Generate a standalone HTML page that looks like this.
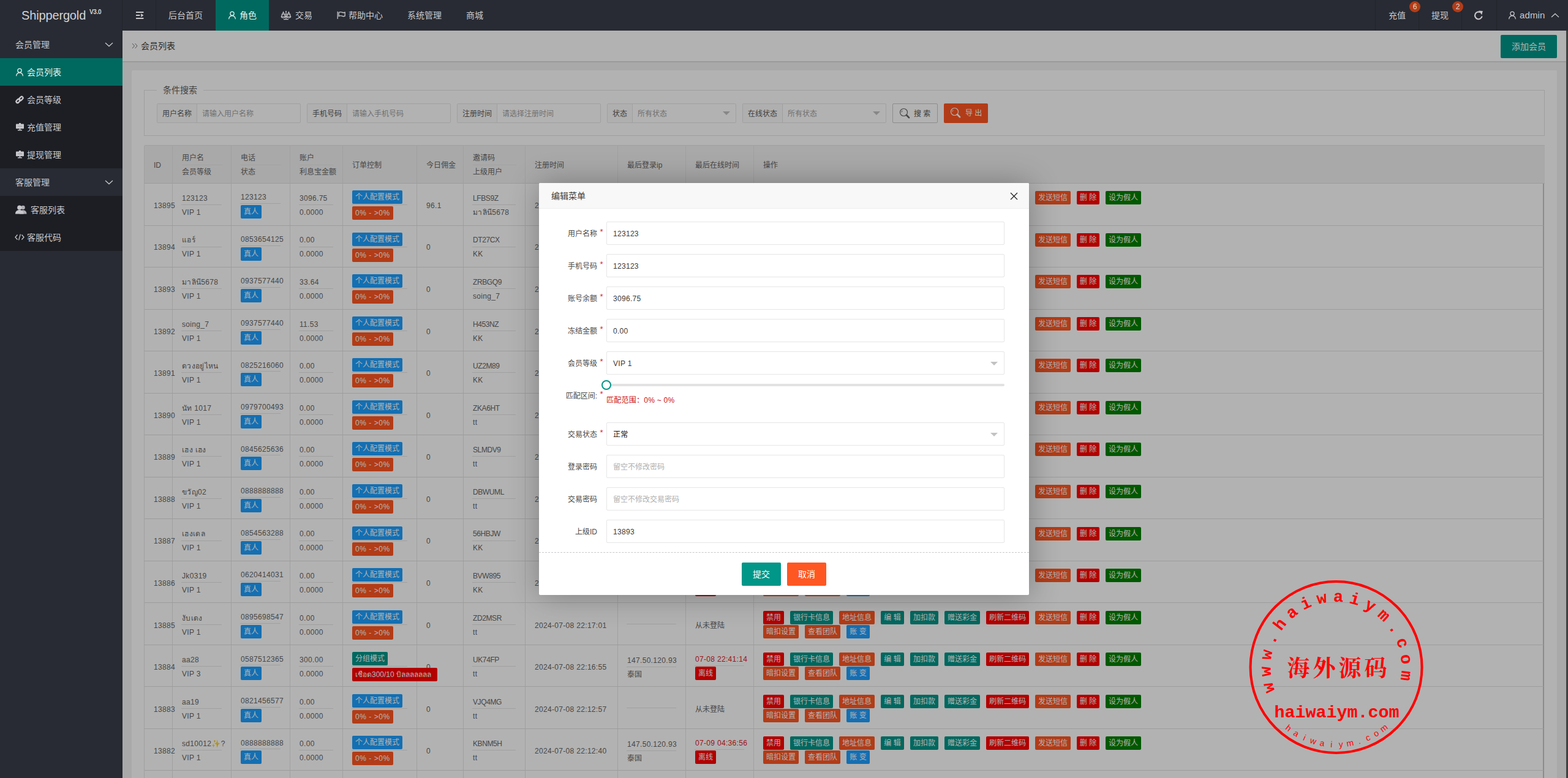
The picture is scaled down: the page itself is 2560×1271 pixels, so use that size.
<!DOCTYPE html><html lang="zh-CN"><head><meta charset="utf-8"><title>会员列表</title><style>
*{box-sizing:border-box;margin:0;padding:0}
html,body{width:2560px;height:1271px;overflow:hidden}
body{position:relative;font-family:"Liberation Sans","Noto Sans CJK SC",sans-serif;font-size:14px;color:#333;background:#f2f2f2;line-height:1}
.abs{position:absolute}
svg{display:block}
/* header */
#hd{z-index:15;position:absolute;left:0;top:0;width:2560px;height:50px;background:#282b33}
#logo{position:absolute;left:0;top:0;width:200px;height:50px;color:#d2d2d6}
#logo .t{position:absolute;left:35px;top:13px;font-size:20px;line-height:24px;letter-spacing:-.15px}
#logo .v{position:absolute;left:146px;top:14px;font-size:10px;line-height:12px;font-weight:bold;letter-spacing:-.3px}
.sep{position:absolute;top:0;width:1px;height:50px;background:rgba(0,0,0,.16)}
.nav{position:absolute;top:0;height:50px;line-height:50px;color:#c8c8cc;font-size:14px;white-space:nowrap}
.nav.on{background:#00695f;color:#e6f4f2}
.nav svg{position:absolute}
.badge{position:absolute;width:18px;height:18px;border-radius:9px;background:#b23d18;color:#e4d8d4;font-size:12px;line-height:18px;text-align:center}
/* sidebar */
#sd{z-index:15;position:absolute;left:0;top:50px;width:200px;height:1221px;background:#282b33}
.si{position:absolute;left:0;width:200px;height:45px;line-height:45px;color:#c8c8cc;font-size:14px;white-space:nowrap}
.si.c{background:#1c1e24}
.si.on{background:#00695f;color:#e6f4f2}
.si span{position:absolute;top:1px}
.si svg{position:absolute}
/* content */
#bc{position:absolute;left:200px;top:50px;width:2357px;height:50px;background:#fff;box-shadow:0 1px 2px 0 rgba(0,0,0,.18)}
#bc .t{position:absolute;left:30px;top:0;line-height:50px;font-size:14px;color:#404040}
#add{position:absolute;left:2250px;top:7px;width:92px;height:38px;line-height:38px;background:#009688;color:#fff;text-align:center;border-radius:2px;font-size:14px}
#card{position:absolute;left:215px;top:115px;width:2327px;height:1200px;background:#fff;border-radius:2px}
#fs{position:absolute;left:235px;top:147px;width:2287px;height:75px;border:1px solid #e2e2e2}
#fs .lg{position:absolute;left:20px;top:-10px;padding:0 10px;background:#fff;font-size:14px;line-height:18px;color:#606060}
.grp{position:absolute;top:169px;height:32px;border:1px solid #e6e6e6;border-radius:2px;background:#fff;font-size:12px;line-height:32px;white-space:nowrap}
.grp .l{position:absolute;left:0;top:0;height:30px;padding:0 8px;background:#FBFBFB;border-right:1px solid #e6e6e6;color:#5a5a5a}
.grp .p{position:absolute;top:0;color:#a2a2a2}
.grp .tri{position:absolute;right:9px;top:12px;width:0;height:0;border:6px solid transparent;border-top-color:#c2c2c2}
.btn{position:absolute;top:169px;height:32px;border-radius:2px;font-size:12px;line-height:32px;white-space:nowrap}
/* table */
#th{position:absolute;left:236px;top:237px;width:2286px;height:63px;background:#f2f2f2;border-top:1px solid #e6e6e6;border-bottom:1px solid #e0e0e0}
.hc{position:absolute;font-size:12px;color:#666;white-space:nowrap;line-height:20px;margin-top:.8px}
.vl{position:absolute;width:1px;background:#e6e6e6}
.row{position:absolute;left:236px;width:2284px;height:68px;font-size:12px;color:#666}
.rl{position:absolute;left:236px;width:2284px;height:1px;background:#e0e0e0}
.row>*{position:absolute;white-space:nowrap}
.tx{line-height:20px;height:20px;letter-spacing:.32px;margin-top:.8px}
.hr{height:1px;background:#e6e6e6}
.bd{height:22px;line-height:23.5px;padding:0 5px;border-radius:2px;color:#fff;font-size:12px;display:inline-block}
.b-blue{background:#1E9FFF}.b-or{background:#FF5722}.b-teal{background:#009688}.b-red{background:#ff0000}.b-green{background:#008000}
.ops{font-size:0}
.ops .bd{position:absolute}
/* shade + modal */
#shade{z-index:10;position:absolute;left:0;top:0;width:2560px;height:1271px;background:rgba(0,0,0,.3)}
#md{z-index:11;position:absolute;left:880px;top:299px;width:800px;height:673px;background:#fff;border-radius:2px;box-shadow:1px 1px 50px rgba(0,0,0,.3)}
#md .tt{position:absolute;left:0;top:0;width:800px;height:42px;background:#F8F8F8;border-bottom:1px solid #eee;border-radius:2px 2px 0 0;line-height:43px;padding-left:20px;font-size:14px;color:#3c3c3c}
.fl{position:absolute;left:0;width:95px;text-align:right;font-size:12px;line-height:40px;color:#4a4a4a;white-space:nowrap}
.st{position:absolute;left:99.5px;color:#d81e3c;font-size:13px;line-height:14px;margin-top:1.5px}
.in{position:absolute;left:110px;width:650px;height:38px;border:1px solid #e6e6e6;border-radius:2px;background:#fff;font-size:12px;line-height:38px;padding-left:10px;color:#3a3a3a;white-space:nowrap;letter-spacing:.3px}
.in.ph{color:#b0b0b0;letter-spacing:0}
.in .tri{position:absolute;right:10px;top:16px;width:0;height:0;border:6px solid transparent;border-top-color:#c2c2c2}
.mb{position:absolute;top:620px;width:64px;height:38px;line-height:38px;text-align:center;color:#fff;font-size:14px;border-radius:2px}
</style></head><body>
<div id="bc"><svg class="abs" style="left:15px;top:20px" width="10" height="10" viewBox="0 0 10 10" fill="none" stroke="#777" stroke-width="1"><path d="M1 1l3.5 4L1 9M5.5 1L9 5 5.5 9"/></svg><div class="t">会员列表</div><div id="add">添加会员</div></div>
<div id="card"></div>
<div id="fs"><div class="lg">条件搜索</div></div>
<div class="grp" style="left:256px;width:235px"><div class="l">用户名称</div><div class="p" style="left:73px">请输入用户名称</div></div>
<div class="grp" style="left:501px;width:235px"><div class="l">手机号码</div><div class="p" style="left:73px">请输入手机号码</div></div>
<div class="grp" style="left:746px;width:235px"><div class="l">注册时间</div><div class="p" style="left:73px">请选择注册时间</div></div>
<div class="grp" style="left:991px;width:211px"><div class="l">状态</div><div class="p" style="left:49px">所有状态</div><div class="tri"></div></div>
<div class="grp" style="left:1212px;width:235px"><div class="l">在线状态</div><div class="p" style="left:73px">所有状态</div><div class="tri"></div></div>
<div class="btn" style="left:1457px;width:74px;border:1px solid #C9C9C9;background:#fff;color:#555"><svg class="abs" style="left:10px;top:6px" width="18" height="18" viewBox="0 0 18 18" fill="none" stroke="#666" stroke-width="1.2"><circle cx="7.5" cy="7.5" r="6"/><path d="M4 7.5a3.5 3.5 0 0 1 1.5-2.8" stroke-width="1"/><path d="M12 12l4 4.2" stroke-width="2.6" stroke-linecap="round"/></svg><span class="abs" style="left:34px;top:0">搜 索</span></div>
<div class="btn" style="left:1541px;width:72px;background:#FF5722;color:#fff;line-height:34px"><svg class="abs" style="left:10px;top:6px" width="18" height="18" viewBox="0 0 18 18" fill="none" stroke="#fff" stroke-width="1.2"><circle cx="7.5" cy="7.5" r="6"/><path d="M4 7.5a3.5 3.5 0 0 1 1.5-2.8" stroke-width="1"/><path d="M12 12l4 4.2" stroke-width="2.6" stroke-linecap="round"/></svg><span class="abs" style="left:35px;top:-1px">导 出</span></div>
<div id="th"></div>
<div class="hc" style="left:251px;top:259px">ID</div>
<div class="hc" style="left:297px;top:247.5px">用户名</div><div class="hc" style="left:297px;top:270.5px">会员等级</div>
<div class="hr abs" style="left:297px;top:269px;width:66px;background:#e9e9e9"></div>
<div class="hc" style="left:393px;top:247.5px">电话</div><div class="hc" style="left:393px;top:270.5px">状态</div>
<div class="hr abs" style="left:393px;top:269px;width:66px;background:#e9e9e9"></div>
<div class="hc" style="left:489px;top:247.5px">账户</div><div class="hc" style="left:489px;top:270.5px">利息宝金额</div>
<div class="hr abs" style="left:489px;top:269px;width:56px;background:#e9e9e9"></div>
<div class="hc" style="left:575px;top:259px">订单控制</div>
<div class="hc" style="left:696px;top:259px">今日佣金</div>
<div class="hc" style="left:772px;top:247.5px">邀请码</div><div class="hc" style="left:772px;top:270.5px">上级用户</div>
<div class="hr abs" style="left:772px;top:269px;width:71px;background:#e9e9e9"></div>
<div class="hc" style="left:873px;top:259px">注册时间</div>
<div class="hc" style="left:1024px;top:259px">最后登录ip</div>
<div class="hc" style="left:1135px;top:259px">最后在线时间</div>
<div class="hc" style="left:1246px;top:259px">操作</div>
<div class="vl" style="left:281px;top:238px;height:1040px"></div>
<div class="vl" style="left:377px;top:238px;height:1040px"></div>
<div class="vl" style="left:473px;top:238px;height:1040px"></div>
<div class="vl" style="left:559px;top:238px;height:1040px"></div>
<div class="vl" style="left:680px;top:238px;height:1040px"></div>
<div class="vl" style="left:756px;top:238px;height:1040px"></div>
<div class="vl" style="left:857px;top:238px;height:1040px"></div>
<div class="vl" style="left:1008px;top:238px;height:1040px"></div>
<div class="vl" style="left:1119px;top:238px;height:1040px"></div>
<div class="vl" style="left:1230px;top:238px;height:1040px"></div>
<div class="vl" style="left:235px;top:238px;height:1040px"></div>
<div class="abs" style="left:2519px;top:300px;width:2px;height:980px;background:#c8c8c8"></div>
<div class="rl" style="top:367.5px"></div><div class="row" style="top:300.00px"><div class="tx" style="left:15px;top:25px">13895</div><div class="tx" style="left:61px;top:13px">123123</div><div class="hr" style="left:60px;top:34px;width:66px"></div><div class="tx" style="left:61px;top:36px">VIP 1</div><div class="tx" style="left:157px;top:11.5px">123123</div><div class="hr" style="left:156px;top:32px;width:66px"></div><div class="bd b-blue" style="left:157px;top:35px">真人</div><div class="tx" style="left:253px;top:13px">3096.75</div><div class="hr" style="left:252px;top:34px;width:56px"></div><div class="tx" style="left:253px;top:36px">0.0000</div><div class="bd b-blue" style="left:339px;top:11px">个人配置模式</div><div class="bd b-or" style="left:339px;top:37px;letter-spacing:.55px">0% - &gt;0%</div><div class="hr" style="left:338px;top:34px;width:91px"></div><div class="tx" style="left:460px;top:25px">96.1</div><div class="tx" style="left:536px;top:13px;letter-spacing:-.4px">LFBS9Z</div><div class="hr" style="left:535px;top:34px;width:71px"></div><div class="tx" style="left:536px;top:36px">มาลินี5678</div><div class="tx" style="left:637px;top:25px">2024-07-08 22:58:31</div><div class="hr" style="left:787px;top:34.5px;width:81px"></div><div class="tx" style="left:788px;top:14px">147.50.120.93</div><div class="tx" style="left:788px;top:36.5px;letter-spacing:0">泰国</div><div class="tx" style="left:899px;top:12px;color:#e02020">07-08 23:02:11</div><div class="hr" style="left:898px;top:33px;width:81px"></div><div class="bd b-red" style="left:899px;top:35px">离线</div><div class="bd b-red" style="left:1010px;top:12px;width:34px;text-align:center;padding:0">禁用</div><div class="bd b-teal" style="left:1054px;top:12px;width:70px;text-align:center;padding:0">银行卡信息</div><div class="bd b-or" style="left:1134px;top:12px;width:58px;text-align:center;padding:0">地址信息</div><div class="bd b-teal" style="left:1202px;top:12px;width:38px;text-align:center;padding:0">编 辑</div><div class="bd b-teal" style="left:1250px;top:12px;width:46px;text-align:center;padding:0">加扣款</div><div class="bd b-teal" style="left:1306px;top:12px;width:58px;text-align:center;padding:0">赠送彩金</div><div class="bd b-red" style="left:1374px;top:12px;width:70px;text-align:center;padding:0">刷新二维码</div><div class="bd b-or" style="left:1454px;top:12px;width:58px;text-align:center;padding:0">发送短信</div><div class="bd b-red" style="left:1522px;top:12px;width:37px;text-align:center;padding:0">删 除</div><div class="bd b-green" style="left:1569px;top:12px;width:58px;text-align:center;padding:0">设为假人</div><div class="bd b-or" style="left:1010px;top:35px;width:58px;text-align:center;padding:0">暗扣设置</div><div class="bd b-or" style="left:1078px;top:35px;width:58px;text-align:center;padding:0">查看团队</div><div class="bd b-blue" style="left:1146px;top:35px;width:38px;text-align:center;padding:0">账 变</div></div>
<div class="rl" style="top:436.0px"></div><div class="row" style="top:368.57px"><div class="tx" style="left:15px;top:25px">13894</div><div class="tx" style="left:61px;top:13px">แอร์</div><div class="hr" style="left:60px;top:34px;width:66px"></div><div class="tx" style="left:61px;top:36px">VIP 1</div><div class="tx" style="left:157px;top:11.5px">0853654125</div><div class="hr" style="left:156px;top:32px;width:66px"></div><div class="bd b-blue" style="left:157px;top:35px">真人</div><div class="tx" style="left:253px;top:13px">0.00</div><div class="hr" style="left:252px;top:34px;width:56px"></div><div class="tx" style="left:253px;top:36px">0.0000</div><div class="bd b-blue" style="left:339px;top:11px">个人配置模式</div><div class="bd b-or" style="left:339px;top:37px;letter-spacing:.55px">0% - &gt;0%</div><div class="hr" style="left:338px;top:34px;width:91px"></div><div class="tx" style="left:460px;top:25px">0</div><div class="tx" style="left:536px;top:13px;letter-spacing:-.4px">DT27CX</div><div class="hr" style="left:535px;top:34px;width:71px"></div><div class="tx" style="left:536px;top:36px">KK</div><div class="tx" style="left:637px;top:25px">2024-07-08 22:51:20</div><div class="hr" style="left:787px;top:33.5px;width:81px"></div><div class="tx" style="left:899px;top:25px;letter-spacing:0">从未登陆</div><div class="bd b-red" style="left:1010px;top:12px;width:34px;text-align:center;padding:0">禁用</div><div class="bd b-teal" style="left:1054px;top:12px;width:70px;text-align:center;padding:0">银行卡信息</div><div class="bd b-or" style="left:1134px;top:12px;width:58px;text-align:center;padding:0">地址信息</div><div class="bd b-teal" style="left:1202px;top:12px;width:38px;text-align:center;padding:0">编 辑</div><div class="bd b-teal" style="left:1250px;top:12px;width:46px;text-align:center;padding:0">加扣款</div><div class="bd b-teal" style="left:1306px;top:12px;width:58px;text-align:center;padding:0">赠送彩金</div><div class="bd b-red" style="left:1374px;top:12px;width:70px;text-align:center;padding:0">刷新二维码</div><div class="bd b-or" style="left:1454px;top:12px;width:58px;text-align:center;padding:0">发送短信</div><div class="bd b-red" style="left:1522px;top:12px;width:37px;text-align:center;padding:0">删 除</div><div class="bd b-green" style="left:1569px;top:12px;width:58px;text-align:center;padding:0">设为假人</div><div class="bd b-or" style="left:1010px;top:35px;width:58px;text-align:center;padding:0">暗扣设置</div><div class="bd b-or" style="left:1078px;top:35px;width:58px;text-align:center;padding:0">查看团队</div><div class="bd b-blue" style="left:1146px;top:35px;width:38px;text-align:center;padding:0">账 变</div></div>
<div class="rl" style="top:504.5px"></div><div class="row" style="top:437.15px"><div class="tx" style="left:15px;top:25px">13893</div><div class="tx" style="left:61px;top:13px">มาลินี5678</div><div class="hr" style="left:60px;top:34px;width:66px"></div><div class="tx" style="left:61px;top:36px">VIP 1</div><div class="tx" style="left:157px;top:11.5px">0937577440</div><div class="hr" style="left:156px;top:32px;width:66px"></div><div class="bd b-blue" style="left:157px;top:35px">真人</div><div class="tx" style="left:253px;top:13px">33.64</div><div class="hr" style="left:252px;top:34px;width:56px"></div><div class="tx" style="left:253px;top:36px">0.0000</div><div class="bd b-blue" style="left:339px;top:11px">个人配置模式</div><div class="bd b-or" style="left:339px;top:37px;letter-spacing:.55px">0% - &gt;0%</div><div class="hr" style="left:338px;top:34px;width:91px"></div><div class="tx" style="left:460px;top:25px">0</div><div class="tx" style="left:536px;top:13px;letter-spacing:-.4px">ZRBGQ9</div><div class="hr" style="left:535px;top:34px;width:71px"></div><div class="tx" style="left:536px;top:36px">soing_7</div><div class="tx" style="left:637px;top:25px">2024-07-08 22:47:03</div><div class="hr" style="left:787px;top:34.5px;width:81px"></div><div class="tx" style="left:788px;top:14px">147.50.120.93</div><div class="tx" style="left:788px;top:36.5px;letter-spacing:0">泰国</div><div class="tx" style="left:899px;top:12px;color:#e02020">07-08 22:59:40</div><div class="hr" style="left:898px;top:33px;width:81px"></div><div class="bd b-red" style="left:899px;top:35px">离线</div><div class="bd b-red" style="left:1010px;top:12px;width:34px;text-align:center;padding:0">禁用</div><div class="bd b-teal" style="left:1054px;top:12px;width:70px;text-align:center;padding:0">银行卡信息</div><div class="bd b-or" style="left:1134px;top:12px;width:58px;text-align:center;padding:0">地址信息</div><div class="bd b-teal" style="left:1202px;top:12px;width:38px;text-align:center;padding:0">编 辑</div><div class="bd b-teal" style="left:1250px;top:12px;width:46px;text-align:center;padding:0">加扣款</div><div class="bd b-teal" style="left:1306px;top:12px;width:58px;text-align:center;padding:0">赠送彩金</div><div class="bd b-red" style="left:1374px;top:12px;width:70px;text-align:center;padding:0">刷新二维码</div><div class="bd b-or" style="left:1454px;top:12px;width:58px;text-align:center;padding:0">发送短信</div><div class="bd b-red" style="left:1522px;top:12px;width:37px;text-align:center;padding:0">删 除</div><div class="bd b-green" style="left:1569px;top:12px;width:58px;text-align:center;padding:0">设为假人</div><div class="bd b-or" style="left:1010px;top:35px;width:58px;text-align:center;padding:0">暗扣设置</div><div class="bd b-or" style="left:1078px;top:35px;width:58px;text-align:center;padding:0">查看团队</div><div class="bd b-blue" style="left:1146px;top:35px;width:38px;text-align:center;padding:0">账 变</div></div>
<div class="rl" style="top:573.0px"></div><div class="row" style="top:505.73px"><div class="tx" style="left:15px;top:25px">13892</div><div class="tx" style="left:61px;top:13px">soing_7</div><div class="hr" style="left:60px;top:34px;width:66px"></div><div class="tx" style="left:61px;top:36px">VIP 1</div><div class="tx" style="left:157px;top:11.5px">0937577440</div><div class="hr" style="left:156px;top:32px;width:66px"></div><div class="bd b-blue" style="left:157px;top:35px">真人</div><div class="tx" style="left:253px;top:13px">11.53</div><div class="hr" style="left:252px;top:34px;width:56px"></div><div class="tx" style="left:253px;top:36px">0.0000</div><div class="bd b-blue" style="left:339px;top:11px">个人配置模式</div><div class="bd b-or" style="left:339px;top:37px;letter-spacing:.55px">0% - &gt;0%</div><div class="hr" style="left:338px;top:34px;width:91px"></div><div class="tx" style="left:460px;top:25px">0</div><div class="tx" style="left:536px;top:13px;letter-spacing:-.4px">H453NZ</div><div class="hr" style="left:535px;top:34px;width:71px"></div><div class="tx" style="left:536px;top:36px">KK</div><div class="tx" style="left:637px;top:25px">2024-07-08 22:41:36</div><div class="hr" style="left:787px;top:34.5px;width:81px"></div><div class="tx" style="left:788px;top:14px">147.50.120.93</div><div class="tx" style="left:788px;top:36.5px;letter-spacing:0">泰国</div><div class="tx" style="left:899px;top:12px;color:#e02020">07-08 22:50:12</div><div class="hr" style="left:898px;top:33px;width:81px"></div><div class="bd b-red" style="left:899px;top:35px">离线</div><div class="bd b-red" style="left:1010px;top:12px;width:34px;text-align:center;padding:0">禁用</div><div class="bd b-teal" style="left:1054px;top:12px;width:70px;text-align:center;padding:0">银行卡信息</div><div class="bd b-or" style="left:1134px;top:12px;width:58px;text-align:center;padding:0">地址信息</div><div class="bd b-teal" style="left:1202px;top:12px;width:38px;text-align:center;padding:0">编 辑</div><div class="bd b-teal" style="left:1250px;top:12px;width:46px;text-align:center;padding:0">加扣款</div><div class="bd b-teal" style="left:1306px;top:12px;width:58px;text-align:center;padding:0">赠送彩金</div><div class="bd b-red" style="left:1374px;top:12px;width:70px;text-align:center;padding:0">刷新二维码</div><div class="bd b-or" style="left:1454px;top:12px;width:58px;text-align:center;padding:0">发送短信</div><div class="bd b-red" style="left:1522px;top:12px;width:37px;text-align:center;padding:0">删 除</div><div class="bd b-green" style="left:1569px;top:12px;width:58px;text-align:center;padding:0">设为假人</div><div class="bd b-or" style="left:1010px;top:35px;width:58px;text-align:center;padding:0">暗扣设置</div><div class="bd b-or" style="left:1078px;top:35px;width:58px;text-align:center;padding:0">查看团队</div><div class="bd b-blue" style="left:1146px;top:35px;width:38px;text-align:center;padding:0">账 变</div></div>
<div class="rl" style="top:641.5px"></div><div class="row" style="top:574.30px"><div class="tx" style="left:15px;top:25px">13891</div><div class="tx" style="left:61px;top:13px">ดวงอยู่ไหน</div><div class="hr" style="left:60px;top:34px;width:66px"></div><div class="tx" style="left:61px;top:36px">VIP 1</div><div class="tx" style="left:157px;top:11.5px">0825216060</div><div class="hr" style="left:156px;top:32px;width:66px"></div><div class="bd b-blue" style="left:157px;top:35px">真人</div><div class="tx" style="left:253px;top:13px">0.00</div><div class="hr" style="left:252px;top:34px;width:56px"></div><div class="tx" style="left:253px;top:36px">0.0000</div><div class="bd b-blue" style="left:339px;top:11px">个人配置模式</div><div class="bd b-or" style="left:339px;top:37px;letter-spacing:.55px">0% - &gt;0%</div><div class="hr" style="left:338px;top:34px;width:91px"></div><div class="tx" style="left:460px;top:25px">0</div><div class="tx" style="left:536px;top:13px;letter-spacing:-.4px">UZ2M89</div><div class="hr" style="left:535px;top:34px;width:71px"></div><div class="tx" style="left:536px;top:36px">KK</div><div class="tx" style="left:637px;top:25px">2024-07-08 22:38:15</div><div class="hr" style="left:787px;top:33.5px;width:81px"></div><div class="tx" style="left:899px;top:25px;letter-spacing:0">从未登陆</div><div class="bd b-red" style="left:1010px;top:12px;width:34px;text-align:center;padding:0">禁用</div><div class="bd b-teal" style="left:1054px;top:12px;width:70px;text-align:center;padding:0">银行卡信息</div><div class="bd b-or" style="left:1134px;top:12px;width:58px;text-align:center;padding:0">地址信息</div><div class="bd b-teal" style="left:1202px;top:12px;width:38px;text-align:center;padding:0">编 辑</div><div class="bd b-teal" style="left:1250px;top:12px;width:46px;text-align:center;padding:0">加扣款</div><div class="bd b-teal" style="left:1306px;top:12px;width:58px;text-align:center;padding:0">赠送彩金</div><div class="bd b-red" style="left:1374px;top:12px;width:70px;text-align:center;padding:0">刷新二维码</div><div class="bd b-or" style="left:1454px;top:12px;width:58px;text-align:center;padding:0">发送短信</div><div class="bd b-red" style="left:1522px;top:12px;width:37px;text-align:center;padding:0">删 除</div><div class="bd b-green" style="left:1569px;top:12px;width:58px;text-align:center;padding:0">设为假人</div><div class="bd b-or" style="left:1010px;top:35px;width:58px;text-align:center;padding:0">暗扣设置</div><div class="bd b-or" style="left:1078px;top:35px;width:58px;text-align:center;padding:0">查看团队</div><div class="bd b-blue" style="left:1146px;top:35px;width:38px;text-align:center;padding:0">账 变</div></div>
<div class="rl" style="top:710.0px"></div><div class="row" style="top:642.88px"><div class="tx" style="left:15px;top:25px">13890</div><div class="tx" style="left:61px;top:13px">นัท 1017</div><div class="hr" style="left:60px;top:34px;width:66px"></div><div class="tx" style="left:61px;top:36px">VIP 1</div><div class="tx" style="left:157px;top:11.5px">0979700493</div><div class="hr" style="left:156px;top:32px;width:66px"></div><div class="bd b-blue" style="left:157px;top:35px">真人</div><div class="tx" style="left:253px;top:13px">0.00</div><div class="hr" style="left:252px;top:34px;width:56px"></div><div class="tx" style="left:253px;top:36px">0.0000</div><div class="bd b-blue" style="left:339px;top:11px">个人配置模式</div><div class="bd b-or" style="left:339px;top:37px;letter-spacing:.55px">0% - &gt;0%</div><div class="hr" style="left:338px;top:34px;width:91px"></div><div class="tx" style="left:460px;top:25px">0</div><div class="tx" style="left:536px;top:13px;letter-spacing:-.4px">ZKA6HT</div><div class="hr" style="left:535px;top:34px;width:71px"></div><div class="tx" style="left:536px;top:36px">tt</div><div class="tx" style="left:637px;top:25px">2024-07-08 22:33:48</div><div class="hr" style="left:787px;top:33.5px;width:81px"></div><div class="tx" style="left:899px;top:25px;letter-spacing:0">从未登陆</div><div class="bd b-red" style="left:1010px;top:12px;width:34px;text-align:center;padding:0">禁用</div><div class="bd b-teal" style="left:1054px;top:12px;width:70px;text-align:center;padding:0">银行卡信息</div><div class="bd b-or" style="left:1134px;top:12px;width:58px;text-align:center;padding:0">地址信息</div><div class="bd b-teal" style="left:1202px;top:12px;width:38px;text-align:center;padding:0">编 辑</div><div class="bd b-teal" style="left:1250px;top:12px;width:46px;text-align:center;padding:0">加扣款</div><div class="bd b-teal" style="left:1306px;top:12px;width:58px;text-align:center;padding:0">赠送彩金</div><div class="bd b-red" style="left:1374px;top:12px;width:70px;text-align:center;padding:0">刷新二维码</div><div class="bd b-or" style="left:1454px;top:12px;width:58px;text-align:center;padding:0">发送短信</div><div class="bd b-red" style="left:1522px;top:12px;width:37px;text-align:center;padding:0">删 除</div><div class="bd b-green" style="left:1569px;top:12px;width:58px;text-align:center;padding:0">设为假人</div><div class="bd b-or" style="left:1010px;top:35px;width:58px;text-align:center;padding:0">暗扣设置</div><div class="bd b-or" style="left:1078px;top:35px;width:58px;text-align:center;padding:0">查看团队</div><div class="bd b-blue" style="left:1146px;top:35px;width:38px;text-align:center;padding:0">账 变</div></div>
<div class="rl" style="top:778.5px"></div><div class="row" style="top:711.45px"><div class="tx" style="left:15px;top:25px">13889</div><div class="tx" style="left:61px;top:13px">เฮง เฮง</div><div class="hr" style="left:60px;top:34px;width:66px"></div><div class="tx" style="left:61px;top:36px">VIP 1</div><div class="tx" style="left:157px;top:11.5px">0845625636</div><div class="hr" style="left:156px;top:32px;width:66px"></div><div class="bd b-blue" style="left:157px;top:35px">真人</div><div class="tx" style="left:253px;top:13px">0.00</div><div class="hr" style="left:252px;top:34px;width:56px"></div><div class="tx" style="left:253px;top:36px">0.0000</div><div class="bd b-blue" style="left:339px;top:11px">个人配置模式</div><div class="bd b-or" style="left:339px;top:37px;letter-spacing:.55px">0% - &gt;0%</div><div class="hr" style="left:338px;top:34px;width:91px"></div><div class="tx" style="left:460px;top:25px">0</div><div class="tx" style="left:536px;top:13px;letter-spacing:-.4px">SLMDV9</div><div class="hr" style="left:535px;top:34px;width:71px"></div><div class="tx" style="left:536px;top:36px">tt</div><div class="tx" style="left:637px;top:25px">2024-07-08 22:30:27</div><div class="hr" style="left:787px;top:33.5px;width:81px"></div><div class="tx" style="left:899px;top:25px;letter-spacing:0">从未登陆</div><div class="bd b-red" style="left:1010px;top:12px;width:34px;text-align:center;padding:0">禁用</div><div class="bd b-teal" style="left:1054px;top:12px;width:70px;text-align:center;padding:0">银行卡信息</div><div class="bd b-or" style="left:1134px;top:12px;width:58px;text-align:center;padding:0">地址信息</div><div class="bd b-teal" style="left:1202px;top:12px;width:38px;text-align:center;padding:0">编 辑</div><div class="bd b-teal" style="left:1250px;top:12px;width:46px;text-align:center;padding:0">加扣款</div><div class="bd b-teal" style="left:1306px;top:12px;width:58px;text-align:center;padding:0">赠送彩金</div><div class="bd b-red" style="left:1374px;top:12px;width:70px;text-align:center;padding:0">刷新二维码</div><div class="bd b-or" style="left:1454px;top:12px;width:58px;text-align:center;padding:0">发送短信</div><div class="bd b-red" style="left:1522px;top:12px;width:37px;text-align:center;padding:0">删 除</div><div class="bd b-green" style="left:1569px;top:12px;width:58px;text-align:center;padding:0">设为假人</div><div class="bd b-or" style="left:1010px;top:35px;width:58px;text-align:center;padding:0">暗扣设置</div><div class="bd b-or" style="left:1078px;top:35px;width:58px;text-align:center;padding:0">查看团队</div><div class="bd b-blue" style="left:1146px;top:35px;width:38px;text-align:center;padding:0">账 变</div></div>
<div class="rl" style="top:847.0px"></div><div class="row" style="top:780.02px"><div class="tx" style="left:15px;top:25px">13888</div><div class="tx" style="left:61px;top:13px">ขวัญ02</div><div class="hr" style="left:60px;top:34px;width:66px"></div><div class="tx" style="left:61px;top:36px">VIP 1</div><div class="tx" style="left:157px;top:11.5px">0888888888</div><div class="hr" style="left:156px;top:32px;width:66px"></div><div class="bd b-blue" style="left:157px;top:35px">真人</div><div class="tx" style="left:253px;top:13px">0.00</div><div class="hr" style="left:252px;top:34px;width:56px"></div><div class="tx" style="left:253px;top:36px">0.0000</div><div class="bd b-blue" style="left:339px;top:11px">个人配置模式</div><div class="bd b-or" style="left:339px;top:37px;letter-spacing:.55px">0% - &gt;0%</div><div class="hr" style="left:338px;top:34px;width:91px"></div><div class="tx" style="left:460px;top:25px">0</div><div class="tx" style="left:536px;top:13px;letter-spacing:-.4px">DBWUML</div><div class="hr" style="left:535px;top:34px;width:71px"></div><div class="tx" style="left:536px;top:36px">tt</div><div class="tx" style="left:637px;top:25px">2024-07-08 22:26:54</div><div class="hr" style="left:787px;top:33.5px;width:81px"></div><div class="tx" style="left:899px;top:25px;letter-spacing:0">从未登陆</div><div class="bd b-red" style="left:1010px;top:12px;width:34px;text-align:center;padding:0">禁用</div><div class="bd b-teal" style="left:1054px;top:12px;width:70px;text-align:center;padding:0">银行卡信息</div><div class="bd b-or" style="left:1134px;top:12px;width:58px;text-align:center;padding:0">地址信息</div><div class="bd b-teal" style="left:1202px;top:12px;width:38px;text-align:center;padding:0">编 辑</div><div class="bd b-teal" style="left:1250px;top:12px;width:46px;text-align:center;padding:0">加扣款</div><div class="bd b-teal" style="left:1306px;top:12px;width:58px;text-align:center;padding:0">赠送彩金</div><div class="bd b-red" style="left:1374px;top:12px;width:70px;text-align:center;padding:0">刷新二维码</div><div class="bd b-or" style="left:1454px;top:12px;width:58px;text-align:center;padding:0">发送短信</div><div class="bd b-red" style="left:1522px;top:12px;width:37px;text-align:center;padding:0">删 除</div><div class="bd b-green" style="left:1569px;top:12px;width:58px;text-align:center;padding:0">设为假人</div><div class="bd b-or" style="left:1010px;top:35px;width:58px;text-align:center;padding:0">暗扣设置</div><div class="bd b-or" style="left:1078px;top:35px;width:58px;text-align:center;padding:0">查看团队</div><div class="bd b-blue" style="left:1146px;top:35px;width:38px;text-align:center;padding:0">账 变</div></div>
<div class="rl" style="top:915.5px"></div><div class="row" style="top:848.60px"><div class="tx" style="left:15px;top:25px">13887</div><div class="tx" style="left:61px;top:13px">เฮงเดล</div><div class="hr" style="left:60px;top:34px;width:66px"></div><div class="tx" style="left:61px;top:36px">VIP 1</div><div class="tx" style="left:157px;top:11.5px">0854563288</div><div class="hr" style="left:156px;top:32px;width:66px"></div><div class="bd b-blue" style="left:157px;top:35px">真人</div><div class="tx" style="left:253px;top:13px">0.00</div><div class="hr" style="left:252px;top:34px;width:56px"></div><div class="tx" style="left:253px;top:36px">0.0000</div><div class="bd b-blue" style="left:339px;top:11px">个人配置模式</div><div class="bd b-or" style="left:339px;top:37px;letter-spacing:.55px">0% - &gt;0%</div><div class="hr" style="left:338px;top:34px;width:91px"></div><div class="tx" style="left:460px;top:25px">0</div><div class="tx" style="left:536px;top:13px;letter-spacing:-.4px">56HBJW</div><div class="hr" style="left:535px;top:34px;width:71px"></div><div class="tx" style="left:536px;top:36px">KK</div><div class="tx" style="left:637px;top:25px">2024-07-08 22:22:19</div><div class="hr" style="left:787px;top:33.5px;width:81px"></div><div class="tx" style="left:899px;top:25px;letter-spacing:0">从未登陆</div><div class="bd b-red" style="left:1010px;top:12px;width:34px;text-align:center;padding:0">禁用</div><div class="bd b-teal" style="left:1054px;top:12px;width:70px;text-align:center;padding:0">银行卡信息</div><div class="bd b-or" style="left:1134px;top:12px;width:58px;text-align:center;padding:0">地址信息</div><div class="bd b-teal" style="left:1202px;top:12px;width:38px;text-align:center;padding:0">编 辑</div><div class="bd b-teal" style="left:1250px;top:12px;width:46px;text-align:center;padding:0">加扣款</div><div class="bd b-teal" style="left:1306px;top:12px;width:58px;text-align:center;padding:0">赠送彩金</div><div class="bd b-red" style="left:1374px;top:12px;width:70px;text-align:center;padding:0">刷新二维码</div><div class="bd b-or" style="left:1454px;top:12px;width:58px;text-align:center;padding:0">发送短信</div><div class="bd b-red" style="left:1522px;top:12px;width:37px;text-align:center;padding:0">删 除</div><div class="bd b-green" style="left:1569px;top:12px;width:58px;text-align:center;padding:0">设为假人</div><div class="bd b-or" style="left:1010px;top:35px;width:58px;text-align:center;padding:0">暗扣设置</div><div class="bd b-or" style="left:1078px;top:35px;width:58px;text-align:center;padding:0">查看团队</div><div class="bd b-blue" style="left:1146px;top:35px;width:38px;text-align:center;padding:0">账 变</div></div>
<div class="rl" style="top:984.0px"></div><div class="row" style="top:917.17px"><div class="tx" style="left:15px;top:25px">13886</div><div class="tx" style="left:61px;top:13px">Jk0319</div><div class="hr" style="left:60px;top:34px;width:66px"></div><div class="tx" style="left:61px;top:36px">VIP 1</div><div class="tx" style="left:157px;top:11.5px">0620414031</div><div class="hr" style="left:156px;top:32px;width:66px"></div><div class="bd b-blue" style="left:157px;top:35px">真人</div><div class="tx" style="left:253px;top:13px">0.00</div><div class="hr" style="left:252px;top:34px;width:56px"></div><div class="tx" style="left:253px;top:36px">0.0000</div><div class="bd b-blue" style="left:339px;top:11px">个人配置模式</div><div class="bd b-or" style="left:339px;top:37px;letter-spacing:.55px">0% - &gt;0%</div><div class="hr" style="left:338px;top:34px;width:91px"></div><div class="tx" style="left:460px;top:25px">0</div><div class="tx" style="left:536px;top:13px;letter-spacing:-.4px">BVW895</div><div class="hr" style="left:535px;top:34px;width:71px"></div><div class="tx" style="left:536px;top:36px">KK</div><div class="tx" style="left:637px;top:25px">2024-07-08 22:19:42</div><div class="hr" style="left:787px;top:34.5px;width:81px"></div><div class="tx" style="left:788px;top:14px">147.50.120.93</div><div class="tx" style="left:788px;top:36.5px;letter-spacing:0">泰国</div><div class="tx" style="left:899px;top:12px;color:#e02020">07-08 22:25:30</div><div class="hr" style="left:898px;top:33px;width:81px"></div><div class="bd b-red" style="left:899px;top:35px">离线</div><div class="bd b-red" style="left:1010px;top:12px;width:34px;text-align:center;padding:0">禁用</div><div class="bd b-teal" style="left:1054px;top:12px;width:70px;text-align:center;padding:0">银行卡信息</div><div class="bd b-or" style="left:1134px;top:12px;width:58px;text-align:center;padding:0">地址信息</div><div class="bd b-teal" style="left:1202px;top:12px;width:38px;text-align:center;padding:0">编 辑</div><div class="bd b-teal" style="left:1250px;top:12px;width:46px;text-align:center;padding:0">加扣款</div><div class="bd b-teal" style="left:1306px;top:12px;width:58px;text-align:center;padding:0">赠送彩金</div><div class="bd b-red" style="left:1374px;top:12px;width:70px;text-align:center;padding:0">刷新二维码</div><div class="bd b-or" style="left:1454px;top:12px;width:58px;text-align:center;padding:0">发送短信</div><div class="bd b-red" style="left:1522px;top:12px;width:37px;text-align:center;padding:0">删 除</div><div class="bd b-green" style="left:1569px;top:12px;width:58px;text-align:center;padding:0">设为假人</div><div class="bd b-or" style="left:1010px;top:35px;width:58px;text-align:center;padding:0">暗扣设置</div><div class="bd b-or" style="left:1078px;top:35px;width:58px;text-align:center;padding:0">查看团队</div><div class="bd b-blue" style="left:1146px;top:35px;width:38px;text-align:center;padding:0">账 变</div></div>
<div class="rl" style="top:1052.5px"></div><div class="row" style="top:985.75px"><div class="tx" style="left:15px;top:25px">13885</div><div class="tx" style="left:61px;top:13px">งับเดง</div><div class="hr" style="left:60px;top:34px;width:66px"></div><div class="tx" style="left:61px;top:36px">VIP 1</div><div class="tx" style="left:157px;top:11.5px">0895698547</div><div class="hr" style="left:156px;top:32px;width:66px"></div><div class="bd b-blue" style="left:157px;top:35px">真人</div><div class="tx" style="left:253px;top:13px">0.00</div><div class="hr" style="left:252px;top:34px;width:56px"></div><div class="tx" style="left:253px;top:36px">0.0000</div><div class="bd b-blue" style="left:339px;top:11px">个人配置模式</div><div class="bd b-or" style="left:339px;top:37px;letter-spacing:.55px">0% - &gt;0%</div><div class="hr" style="left:338px;top:34px;width:91px"></div><div class="tx" style="left:460px;top:25px">0</div><div class="tx" style="left:536px;top:13px;letter-spacing:-.4px">ZD2MSR</div><div class="hr" style="left:535px;top:34px;width:71px"></div><div class="tx" style="left:536px;top:36px">tt</div><div class="tx" style="left:637px;top:25px">2024-07-08 22:17:01</div><div class="hr" style="left:787px;top:33.5px;width:81px"></div><div class="tx" style="left:899px;top:25px;letter-spacing:0">从未登陆</div><div class="bd b-red" style="left:1010px;top:12px;width:34px;text-align:center;padding:0">禁用</div><div class="bd b-teal" style="left:1054px;top:12px;width:70px;text-align:center;padding:0">银行卡信息</div><div class="bd b-or" style="left:1134px;top:12px;width:58px;text-align:center;padding:0">地址信息</div><div class="bd b-teal" style="left:1202px;top:12px;width:38px;text-align:center;padding:0">编 辑</div><div class="bd b-teal" style="left:1250px;top:12px;width:46px;text-align:center;padding:0">加扣款</div><div class="bd b-teal" style="left:1306px;top:12px;width:58px;text-align:center;padding:0">赠送彩金</div><div class="bd b-red" style="left:1374px;top:12px;width:70px;text-align:center;padding:0">刷新二维码</div><div class="bd b-or" style="left:1454px;top:12px;width:58px;text-align:center;padding:0">发送短信</div><div class="bd b-red" style="left:1522px;top:12px;width:37px;text-align:center;padding:0">删 除</div><div class="bd b-green" style="left:1569px;top:12px;width:58px;text-align:center;padding:0">设为假人</div><div class="bd b-or" style="left:1010px;top:35px;width:58px;text-align:center;padding:0">暗扣设置</div><div class="bd b-or" style="left:1078px;top:35px;width:58px;text-align:center;padding:0">查看团队</div><div class="bd b-blue" style="left:1146px;top:35px;width:38px;text-align:center;padding:0">账 变</div></div>
<div class="rl" style="top:1121.0px"></div><div class="row" style="top:1054.33px"><div class="tx" style="left:15px;top:25px">13884</div><div class="tx" style="left:61px;top:13px">aa28</div><div class="hr" style="left:60px;top:34px;width:66px"></div><div class="tx" style="left:61px;top:36px">VIP 3</div><div class="tx" style="left:157px;top:11.5px">0587512365</div><div class="hr" style="left:156px;top:32px;width:66px"></div><div class="bd b-blue" style="left:157px;top:35px">真人</div><div class="tx" style="left:253px;top:13px">300.00</div><div class="hr" style="left:252px;top:34px;width:56px"></div><div class="tx" style="left:253px;top:36px">0.0000</div><div class="bd b-teal" style="left:339px;top:11px">分组模式</div><div class="bd b-red" style="left:339px;top:37px;width:139px;z-index:2">เชือด300/10 บิลลลลลลล</div><div class="hr" style="left:338px;top:34px;width:91px"></div><div class="tx" style="left:460px;top:25px">0</div><div class="tx" style="left:536px;top:13px;letter-spacing:-.4px">UK74FP</div><div class="hr" style="left:535px;top:34px;width:71px"></div><div class="tx" style="left:536px;top:36px">tt</div><div class="tx" style="left:637px;top:25px">2024-07-08 22:16:55</div><div class="hr" style="left:787px;top:34.5px;width:81px"></div><div class="tx" style="left:788px;top:14px">147.50.120.93</div><div class="tx" style="left:788px;top:36.5px;letter-spacing:0">泰国</div><div class="tx" style="left:899px;top:12px;color:#e02020">07-08 22:41:14</div><div class="hr" style="left:898px;top:33px;width:81px"></div><div class="bd b-red" style="left:899px;top:35px">离线</div><div class="bd b-red" style="left:1010px;top:12px;width:34px;text-align:center;padding:0">禁用</div><div class="bd b-teal" style="left:1054px;top:12px;width:70px;text-align:center;padding:0">银行卡信息</div><div class="bd b-or" style="left:1134px;top:12px;width:58px;text-align:center;padding:0">地址信息</div><div class="bd b-teal" style="left:1202px;top:12px;width:38px;text-align:center;padding:0">编 辑</div><div class="bd b-teal" style="left:1250px;top:12px;width:46px;text-align:center;padding:0">加扣款</div><div class="bd b-teal" style="left:1306px;top:12px;width:58px;text-align:center;padding:0">赠送彩金</div><div class="bd b-red" style="left:1374px;top:12px;width:70px;text-align:center;padding:0">刷新二维码</div><div class="bd b-or" style="left:1454px;top:12px;width:58px;text-align:center;padding:0">发送短信</div><div class="bd b-red" style="left:1522px;top:12px;width:37px;text-align:center;padding:0">删 除</div><div class="bd b-green" style="left:1569px;top:12px;width:58px;text-align:center;padding:0">设为假人</div><div class="bd b-or" style="left:1010px;top:35px;width:58px;text-align:center;padding:0">暗扣设置</div><div class="bd b-or" style="left:1078px;top:35px;width:58px;text-align:center;padding:0">查看团队</div><div class="bd b-blue" style="left:1146px;top:35px;width:38px;text-align:center;padding:0">账 变</div></div>
<div class="rl" style="top:1189.5px"></div><div class="row" style="top:1122.90px"><div class="tx" style="left:15px;top:25px">13883</div><div class="tx" style="left:61px;top:13px">aa19</div><div class="hr" style="left:60px;top:34px;width:66px"></div><div class="tx" style="left:61px;top:36px">VIP 1</div><div class="tx" style="left:157px;top:11.5px">0821456577</div><div class="hr" style="left:156px;top:32px;width:66px"></div><div class="bd b-blue" style="left:157px;top:35px">真人</div><div class="tx" style="left:253px;top:13px">0.00</div><div class="hr" style="left:252px;top:34px;width:56px"></div><div class="tx" style="left:253px;top:36px">0.0000</div><div class="bd b-blue" style="left:339px;top:11px">个人配置模式</div><div class="bd b-or" style="left:339px;top:37px;letter-spacing:.55px">0% - &gt;0%</div><div class="hr" style="left:338px;top:34px;width:91px"></div><div class="tx" style="left:460px;top:25px">0</div><div class="tx" style="left:536px;top:13px;letter-spacing:-.4px">VJQ4MG</div><div class="hr" style="left:535px;top:34px;width:71px"></div><div class="tx" style="left:536px;top:36px">tt</div><div class="tx" style="left:637px;top:25px">2024-07-08 22:12:57</div><div class="hr" style="left:787px;top:33.5px;width:81px"></div><div class="tx" style="left:899px;top:25px;letter-spacing:0">从未登陆</div><div class="bd b-red" style="left:1010px;top:12px;width:34px;text-align:center;padding:0">禁用</div><div class="bd b-teal" style="left:1054px;top:12px;width:70px;text-align:center;padding:0">银行卡信息</div><div class="bd b-or" style="left:1134px;top:12px;width:58px;text-align:center;padding:0">地址信息</div><div class="bd b-teal" style="left:1202px;top:12px;width:38px;text-align:center;padding:0">编 辑</div><div class="bd b-teal" style="left:1250px;top:12px;width:46px;text-align:center;padding:0">加扣款</div><div class="bd b-teal" style="left:1306px;top:12px;width:58px;text-align:center;padding:0">赠送彩金</div><div class="bd b-red" style="left:1374px;top:12px;width:70px;text-align:center;padding:0">刷新二维码</div><div class="bd b-or" style="left:1454px;top:12px;width:58px;text-align:center;padding:0">发送短信</div><div class="bd b-red" style="left:1522px;top:12px;width:37px;text-align:center;padding:0">删 除</div><div class="bd b-green" style="left:1569px;top:12px;width:58px;text-align:center;padding:0">设为假人</div><div class="bd b-or" style="left:1010px;top:35px;width:58px;text-align:center;padding:0">暗扣设置</div><div class="bd b-or" style="left:1078px;top:35px;width:58px;text-align:center;padding:0">查看团队</div><div class="bd b-blue" style="left:1146px;top:35px;width:38px;text-align:center;padding:0">账 变</div></div>
<div class="rl" style="top:1258.0px"></div><div class="row" style="top:1191.47px"><div class="tx" style="left:15px;top:25px">13882</div><div class="tx" style="left:61px;top:13px">sd10012<span style="color:#e0b020">✨</span>?</div><div class="hr" style="left:60px;top:34px;width:66px"></div><div class="tx" style="left:61px;top:36px">VIP 1</div><div class="tx" style="left:157px;top:11.5px">0888888888</div><div class="hr" style="left:156px;top:32px;width:66px"></div><div class="bd b-blue" style="left:157px;top:35px">真人</div><div class="tx" style="left:253px;top:13px">0.00</div><div class="hr" style="left:252px;top:34px;width:56px"></div><div class="tx" style="left:253px;top:36px">0.0000</div><div class="bd b-blue" style="left:339px;top:11px">个人配置模式</div><div class="bd b-or" style="left:339px;top:37px;letter-spacing:.55px">0% - &gt;0%</div><div class="hr" style="left:338px;top:34px;width:91px"></div><div class="tx" style="left:460px;top:25px">0</div><div class="tx" style="left:536px;top:13px;letter-spacing:-.4px">KBNM5H</div><div class="hr" style="left:535px;top:34px;width:71px"></div><div class="tx" style="left:536px;top:36px">tt</div><div class="tx" style="left:637px;top:25px">2024-07-08 22:12:40</div><div class="hr" style="left:787px;top:34.5px;width:81px"></div><div class="tx" style="left:788px;top:14px">147.50.120.93</div><div class="tx" style="left:788px;top:36.5px;letter-spacing:0">泰国</div><div class="tx" style="left:899px;top:12px;color:#e02020">07-09 04:36:56</div><div class="hr" style="left:898px;top:33px;width:81px"></div><div class="bd b-red" style="left:899px;top:35px">离线</div><div class="bd b-red" style="left:1010px;top:12px;width:34px;text-align:center;padding:0">禁用</div><div class="bd b-teal" style="left:1054px;top:12px;width:70px;text-align:center;padding:0">银行卡信息</div><div class="bd b-or" style="left:1134px;top:12px;width:58px;text-align:center;padding:0">地址信息</div><div class="bd b-teal" style="left:1202px;top:12px;width:38px;text-align:center;padding:0">编 辑</div><div class="bd b-teal" style="left:1250px;top:12px;width:46px;text-align:center;padding:0">加扣款</div><div class="bd b-teal" style="left:1306px;top:12px;width:58px;text-align:center;padding:0">赠送彩金</div><div class="bd b-red" style="left:1374px;top:12px;width:70px;text-align:center;padding:0">刷新二维码</div><div class="bd b-or" style="left:1454px;top:12px;width:58px;text-align:center;padding:0">发送短信</div><div class="bd b-red" style="left:1522px;top:12px;width:37px;text-align:center;padding:0">删 除</div><div class="bd b-green" style="left:1569px;top:12px;width:58px;text-align:center;padding:0">设为假人</div><div class="bd b-or" style="left:1010px;top:35px;width:58px;text-align:center;padding:0">暗扣设置</div><div class="bd b-or" style="left:1078px;top:35px;width:58px;text-align:center;padding:0">查看团队</div><div class="bd b-blue" style="left:1146px;top:35px;width:38px;text-align:center;padding:0">账 变</div></div>
<div class="rl" style="top:1326.5px"></div><div class="row" style="top:1260.05px"><div class="tx" style="left:15px;top:25px">13881</div><div class="tx" style="left:61px;top:13px">aa18</div><div class="hr" style="left:60px;top:34px;width:66px"></div><div class="tx" style="left:61px;top:36px">VIP 1</div><div class="tx" style="left:157px;top:11.5px">0812345678</div><div class="hr" style="left:156px;top:32px;width:66px"></div><div class="bd b-blue" style="left:157px;top:35px">真人</div><div class="tx" style="left:253px;top:13px">0.00</div><div class="hr" style="left:252px;top:34px;width:56px"></div><div class="tx" style="left:253px;top:36px">0.0000</div><div class="bd b-blue" style="left:339px;top:11px">个人配置模式</div><div class="bd b-or" style="left:339px;top:37px;letter-spacing:.55px">0% - &gt;0%</div><div class="hr" style="left:338px;top:34px;width:91px"></div><div class="tx" style="left:460px;top:25px">0</div><div class="tx" style="left:536px;top:13px;letter-spacing:-.4px">QW3ERT</div><div class="hr" style="left:535px;top:34px;width:71px"></div><div class="tx" style="left:536px;top:36px">tt</div><div class="tx" style="left:637px;top:25px">2024-07-08 22:10:02</div><div class="hr" style="left:787px;top:33.5px;width:81px"></div><div class="tx" style="left:899px;top:25px;letter-spacing:0">从未登陆</div><div class="bd b-red" style="left:1010px;top:12px;width:34px;text-align:center;padding:0">禁用</div><div class="bd b-teal" style="left:1054px;top:12px;width:70px;text-align:center;padding:0">银行卡信息</div><div class="bd b-or" style="left:1134px;top:12px;width:58px;text-align:center;padding:0">地址信息</div><div class="bd b-teal" style="left:1202px;top:12px;width:38px;text-align:center;padding:0">编 辑</div><div class="bd b-teal" style="left:1250px;top:12px;width:46px;text-align:center;padding:0">加扣款</div><div class="bd b-teal" style="left:1306px;top:12px;width:58px;text-align:center;padding:0">赠送彩金</div><div class="bd b-red" style="left:1374px;top:12px;width:70px;text-align:center;padding:0">刷新二维码</div><div class="bd b-or" style="left:1454px;top:12px;width:58px;text-align:center;padding:0">发送短信</div><div class="bd b-red" style="left:1522px;top:12px;width:37px;text-align:center;padding:0">删 除</div><div class="bd b-green" style="left:1569px;top:12px;width:58px;text-align:center;padding:0">设为假人</div><div class="bd b-or" style="left:1010px;top:35px;width:58px;text-align:center;padding:0">暗扣设置</div><div class="bd b-or" style="left:1078px;top:35px;width:58px;text-align:center;padding:0">查看团队</div><div class="bd b-blue" style="left:1146px;top:35px;width:38px;text-align:center;padding:0">账 变</div></div><div id="hd">
<div id="logo"><div class="t">Shippergold</div><div class="v">V3.0</div></div>
<div class="sep" style="left:199px"></div>
<div class="sep" style="left:254px"></div>
<div class="sep" style="left:2245px"></div>
<div class="sep" style="left:2316px"></div>
<div class="sep" style="left:2386px"></div>
<div class="sep" style="left:2443px"></div>
<svg class="abs" style="left:221px;top:18px" width="14" height="14" viewBox="0 0 14 14" fill="#c8c8cc"><rect x="1" y="1" width="12.4" height="2"/><rect x="1" y="6" width="6.4" height="2"/><rect x="1" y="11" width="12.4" height="2"/><path d="M9.2 3.9L13.4 7 9.2 10.1z"/></svg>
<div class="nav" style="left:255px;width:97px"><span class="abs" style="left:20px">后台首页</span></div>
<div class="nav on" style="left:352px;width:87px"><svg style="left:20px;top:18px" width="14" height="14" viewBox="0 0 14 14" fill="none" stroke="#e6f4f2" stroke-width="1.25"><circle cx="7" cy="4.3" r="3.1"/><path d="M1.6 13.2c.3-3.4 2.4-5.4 5.4-5.4s5.1 2 5.4 5.4"/></svg><span class="abs" style="left:39px">角色</span></div>
<div class="nav" style="left:439px;width:91px"><svg style="left:19px;top:17px" width="18" height="16" viewBox="0 0 18 16" fill="none" stroke="#c8c8cc" stroke-width="1.15"><path d="M9 1.2v13M5 14.6h8M1.6 6.2h14.8M4.6 2.6L1.4 10h6.400zM13.4 2.600l-3.200 7.400h6.400z"/><path d="M1.400 10a3.200 2 0 0 0 6.400 0M10.200 10a3.200 2 0 0 0 6.400 0"/><circle cx="9" cy="1.600" r=".9" fill="#c8c8cc" stroke="none"/></svg><span class="abs" style="left:43px">交易</span></div>
<div class="nav" style="left:530px;width:115px"><svg style="left:20px;top:18px" width="15" height="14" viewBox="0 0 15 14" fill="none" stroke="#c8c8cc" stroke-width="1.3"><path d="M1.2 .8v12.2"/><path d="M3.2 2.4c2-1 3.6-.9 5.2-.2s3 .8 4.8 0v6c-1.800.8-3.200.7-4.800 0s-3.200-.8-5.200.2z"/></svg><span class="abs" style="left:39px">帮助中心</span></div>
<div class="nav" style="left:645px;width:96px"><span class="abs" style="left:20px">系统管理</span></div>
<div class="nav" style="left:741px;width:68px"><span class="abs" style="left:20px">商城</span></div>
<div class="nav" style="left:2267px">充值</div><div class="badge" style="left:2301px;top:2px">6</div>
<div class="nav" style="left:2337px">提现</div><div class="badge" style="left:2371px;top:2px">2</div>
<svg class="abs" style="left:2406px;top:17px" width="16" height="16" viewBox="0 0 16 16" fill="none" stroke="#c8c8cc" stroke-width="2.1"><path d="M13.7 9.6A5.9 5.9 0 1 1 10.6 3"/><path d="M8.2 .6l6.6.5-1.6 6.2z" fill="#c8c8cc" stroke="none"/></svg>
<div class="nav" style="left:2462px;width:90px"><svg style="left:0px;top:18px" width="14" height="14" viewBox="0 0 14 14" fill="none" stroke="#c8c8cc" stroke-width="1.25"><circle cx="7" cy="4.3" r="3.1"/><path d="M1.6 13.2c.3-3.4 2.4-5.4 5.4-5.4s5.1 2 5.4 5.4"/></svg><span class="abs" style="left:19px;font-size:15px;letter-spacing:.1px">admin</span><svg style="left:70px;top:21px" width="14" height="8" viewBox="0 0 14 8" fill="none" stroke="#c8c8cc" stroke-width="1.3"><path d="M1 7l6-5.6L13 7"/></svg></div>
</div>
<div id="sd">
<div class="si p" style="top:0px"><svg style="left:171px;top:19px" width="14" height="8" viewBox="0 0 14 8" fill="none" stroke="#c8c8cc" stroke-width="1.3"><path d="M1 1l6 5.6L13 1"/></svg><span style="left:25px">会员管理</span></div>
<div class="si on" style="top:45px"><svg style="left:25px;top:16px" width="14" height="14" viewBox="0 0 14 14" fill="none" stroke="#e6f4f2" stroke-width="1.25"><circle cx="7" cy="4.3" r="3.1"/><path d="M1.6 13.2c.3-3.4 2.4-5.4 5.4-5.4s5.1 2 5.4 5.4"/></svg><span style="left:44px">会员列表</span></div>
<div class="si c" style="top:90px"><svg style="left:25px;top:15.500px" width="14" height="14" viewBox="0 0 15 15" fill="none" stroke="#c8c8cc" stroke-width="2.5"><rect x="1.2" y="7.2" width="7.4" height="4.6" rx="2.3" transform="rotate(-45 4.9 9.5)"/><rect x="6.4" y="3" width="7.4" height="4.6" rx="2.3" transform="rotate(-45 10.1 5.3)"/></svg><span style="left:44px">会员等级</span></div>
<div class="si c" style="top:135px"><svg style="left:26px;top:16px" width="13" height="13" viewBox="0 0 13 13" fill="#c8c8cc"><rect x="0" y="1.6" width="13" height="7.6" rx=".8"/><rect x="5" y="0" width="3" height="2"/><rect x="5.7" y="9" width="1.6" height="2.4"/><rect x="3" y="11" width="7" height="1.4"/><rect x="3" y="4.800" width="7" height=".8" fill="#1c1e24" opacity=".35"/></svg><span style="left:44px">充值管理</span></div>
<div class="si c" style="top:180px"><svg style="left:26px;top:16px" width="13" height="13" viewBox="0 0 13 13" fill="#c8c8cc"><rect x="0" y="1.6" width="13" height="7.6" rx=".8"/><rect x="5" y="0" width="3" height="2"/><rect x="5.7" y="9" width="1.6" height="2.4"/><rect x="3" y="11" width="7" height="1.4"/><rect x="3" y="4.800" width="7" height=".8" fill="#1c1e24" opacity=".35"/></svg><span style="left:44px">提现管理</span></div>
<div class="si p" style="top:225px"><svg style="left:171px;top:19px" width="14" height="8" viewBox="0 0 14 8" fill="none" stroke="#c8c8cc" stroke-width="1.3"><path d="M1 1l6 5.6L13 1"/></svg><span style="left:25px">客服管理</span></div>
<div class="si c" style="top:270px"><svg style="left:24px;top:15px" width="21" height="15" viewBox="0 0 21 15" fill="#c8c8cc"><circle cx="13.6" cy="4" r="3.2" opacity=".85"/><path d="M8 14.5c0-4 2.2-6.2 5.6-6.2s5.9 2.2 5.9 6.2z" opacity=".85"/><circle cx="7.8" cy="4.2" r="3.6"/><path d="M1 14.5c0-4.2 2.6-6.4 6.8-6.4s6.8 2.2 6.8 6.4z"/></svg><span style="left:50px">客服列表</span></div>
<div class="si c" style="top:315px"><svg style="left:24px;top:17px" width="16" height="11" viewBox="0 0 16 11" fill="none" stroke="#c8c8cc" stroke-width="1.3"><path d="M4.5 1.5L1 5.5l3.5 4M11.5 1.5L15 5.5l-3.5 4M9.4 .6L6.6 10.4"/></svg><span style="left:44px">客服代码</span></div>
</div>
<div class="abs" style="left:2557px;top:50px;width:3px;height:1221px;background:#5c5c5c"></div>
<div id="shade"></div>
<div id="md"><div class="tt">编辑菜单</div>
<svg class="abs" style="left:769px;top:15px" width="13" height="13" viewBox="0 0 13 13" fill="none" stroke="#222" stroke-width="1.3"><path d="M1 1l11 11M12 1L1 12"/></svg>
<div class="fl" style="top:63px">用户名称</div>
<div class="st" style="top:71px">*</div>
<div class="in" style="top:63px">123123</div>
<div class="fl" style="top:116px">手机号码</div>
<div class="st" style="top:124px">*</div>
<div class="in" style="top:116px">123123</div>
<div class="fl" style="top:169px">账号余额</div>
<div class="st" style="top:177px">*</div>
<div class="in" style="top:169px">3096.75</div>
<div class="fl" style="top:222px">冻结金额</div>
<div class="st" style="top:230px">*</div>
<div class="in" style="top:222px">0.00</div>
<div class="fl" style="top:275px">会员等级</div>
<div class="st" style="top:283px">*</div>
<div class="in" style="top:275px">VIP 1<div class="tri"></div></div>
<div class="fl" style="top:391px">交易状态</div>
<div class="st" style="top:399px">*</div>
<div class="in" style="top:391px;color:#111">正常<div class="tri"></div></div>
<div class="fl" style="top:444px">登录密码</div>
<div class="in ph" style="top:444px">留空不修改密码</div>
<div class="fl" style="top:497px">交易密码</div>
<div class="in ph" style="top:497px">留空不修改交易密码</div>
<div class="fl" style="top:550px">上级ID</div>
<div class="in" style="top:550px">13893</div>
<div class="abs" style="left:110px;top:328px;width:650px;height:4px;border-radius:2px;background:#e2e2e2"></div>
<div class="abs" style="left:102px;top:322px;width:16px;height:16px;border-radius:8px;border:2px solid #009688;background:#fff"></div>
<div class="fl" style="top:328px">匹配区间:</div><div class="st" style="top:336px">*</div>
<div class="abs" style="left:110px;top:347px;font-size:12px;line-height:16px;color:#cc1212;white-space:nowrap;letter-spacing:.25px">匹配范围：0% ~ 0%</div>
<div class="abs" style="left:0;top:603px;width:800px;height:0;border-top:1px dashed #c8c8cc"></div>
<div class="mb" style="left:331px;background:#009688">提交</div><div class="mb" style="left:405px;background:#FF5722">取消</div>
</div>
<svg class="abs" style="left:0;top:0;z-index:12" width="2560" height="1271" viewBox="0 0 2560 1271" fill="#f00" font-family="Liberation Sans, sans-serif"><circle cx="2181.5" cy="1090" r="140" fill="none" stroke="#f00" stroke-width="4"/><text x="2072.5" y="1123.3" transform="rotate(-107.0 2072.5 1123.3)" font-family="Liberation Mono, monospace" font-size="27" font-weight="bold" text-anchor="middle" dominant-baseline="central">w</text><text x="2067.7" y="1096.8" transform="rotate(-93.4 2067.7 1096.8)" font-family="Liberation Mono, monospace" font-size="27" font-weight="bold" text-anchor="middle" dominant-baseline="central">w</text><text x="2069.3" y="1069.8" transform="rotate(-79.8 2069.3 1069.8)" font-family="Liberation Mono, monospace" font-size="27" font-weight="bold" text-anchor="middle" dominant-baseline="central">w</text><text x="2077.2" y="1044.0" transform="rotate(-66.2 2077.2 1044.0)" font-family="Liberation Mono, monospace" font-size="27" font-weight="bold" text-anchor="middle" dominant-baseline="central">.</text><text x="2090.9" y="1020.8" transform="rotate(-52.6 2090.9 1020.8)" font-family="Liberation Mono, monospace" font-size="27" font-weight="bold" text-anchor="middle" dominant-baseline="central">h</text><text x="2109.8" y="1001.4" transform="rotate(-39.0 2109.8 1001.4)" font-family="Liberation Mono, monospace" font-size="27" font-weight="bold" text-anchor="middle" dominant-baseline="central">a</text><text x="2132.6" y="987.0" transform="rotate(-25.4 2132.6 987.0)" font-family="Liberation Mono, monospace" font-size="27" font-weight="bold" text-anchor="middle" dominant-baseline="central">i</text><text x="2158.2" y="978.4" transform="rotate(-11.8 2158.2 978.4)" font-family="Liberation Mono, monospace" font-size="27" font-weight="bold" text-anchor="middle" dominant-baseline="central">w</text><text x="2185.1" y="976.1" transform="rotate(1.8 2185.1 976.1)" font-family="Liberation Mono, monospace" font-size="27" font-weight="bold" text-anchor="middle" dominant-baseline="central">a</text><text x="2211.8" y="980.1" transform="rotate(15.4 2211.8 980.1)" font-family="Liberation Mono, monospace" font-size="27" font-weight="bold" text-anchor="middle" dominant-baseline="central">i</text><text x="2236.8" y="990.3" transform="rotate(29.0 2236.8 990.3)" font-family="Liberation Mono, monospace" font-size="27" font-weight="bold" text-anchor="middle" dominant-baseline="central">y</text><text x="2258.7" y="1006.1" transform="rotate(42.6 2258.7 1006.1)" font-family="Liberation Mono, monospace" font-size="27" font-weight="bold" text-anchor="middle" dominant-baseline="central">m</text><text x="2276.2" y="1026.6" transform="rotate(56.2 2276.2 1026.6)" font-family="Liberation Mono, monospace" font-size="27" font-weight="bold" text-anchor="middle" dominant-baseline="central">.</text><text x="2288.5" y="1050.6" transform="rotate(69.8 2288.5 1050.6)" font-family="Liberation Mono, monospace" font-size="27" font-weight="bold" text-anchor="middle" dominant-baseline="central">c</text><text x="2294.7" y="1076.9" transform="rotate(83.4 2294.7 1076.9)" font-family="Liberation Mono, monospace" font-size="27" font-weight="bold" text-anchor="middle" dominant-baseline="central">o</text><text x="2294.7" y="1103.9" transform="rotate(97.0 2294.7 1103.9)" font-family="Liberation Mono, monospace" font-size="27" font-weight="bold" text-anchor="middle" dominant-baseline="central">m</text><text x="2103.9" y="1189.3" transform="rotate(398.0 2103.9 1189.3)" font-family="Liberation Sans, sans-serif" font-size="14" font-weight="normal" text-anchor="middle" dominant-baseline="central">h</text><text x="2116.4" y="1197.9" transform="rotate(391.1 2116.4 1197.9)" font-family="Liberation Sans, sans-serif" font-size="14" font-weight="normal" text-anchor="middle" dominant-baseline="central">a</text><text x="2129.9" y="1204.9" transform="rotate(384.2 2129.9 1204.9)" font-family="Liberation Sans, sans-serif" font-size="14" font-weight="normal" text-anchor="middle" dominant-baseline="central">i</text><text x="2144.1" y="1210.3" transform="rotate(377.3 2144.1 1210.3)" font-family="Liberation Sans, sans-serif" font-size="14" font-weight="normal" text-anchor="middle" dominant-baseline="central">w</text><text x="2158.8" y="1213.9" transform="rotate(370.4 2158.8 1213.9)" font-family="Liberation Sans, sans-serif" font-size="14" font-weight="normal" text-anchor="middle" dominant-baseline="central">a</text><text x="2173.9" y="1215.8" transform="rotate(363.5 2173.9 1215.8)" font-family="Liberation Sans, sans-serif" font-size="14" font-weight="normal" text-anchor="middle" dominant-baseline="central">i</text><text x="2189.1" y="1215.8" transform="rotate(356.5 2189.1 1215.8)" font-family="Liberation Sans, sans-serif" font-size="14" font-weight="normal" text-anchor="middle" dominant-baseline="central">y</text><text x="2204.2" y="1213.9" transform="rotate(349.6 2204.2 1213.9)" font-family="Liberation Sans, sans-serif" font-size="14" font-weight="normal" text-anchor="middle" dominant-baseline="central">m</text><text x="2218.9" y="1210.3" transform="rotate(342.7 2218.9 1210.3)" font-family="Liberation Sans, sans-serif" font-size="14" font-weight="normal" text-anchor="middle" dominant-baseline="central">.</text><text x="2233.1" y="1204.9" transform="rotate(335.8 2233.1 1204.9)" font-family="Liberation Sans, sans-serif" font-size="14" font-weight="normal" text-anchor="middle" dominant-baseline="central">c</text><text x="2246.6" y="1197.9" transform="rotate(328.9 2246.6 1197.9)" font-family="Liberation Sans, sans-serif" font-size="14" font-weight="normal" text-anchor="middle" dominant-baseline="central">o</text><text x="2259.1" y="1189.3" transform="rotate(322.0 2259.1 1189.3)" font-family="Liberation Sans, sans-serif" font-size="14" font-weight="normal" text-anchor="middle" dominant-baseline="central">m</text><text x="2185.5" y="1105" font-family="Noto Serif CJK SC, serif" font-size="37" font-weight="bold" text-anchor="middle" letter-spacing="5">海外源码</text><text x="2182.5" y="1171.5" font-family="Liberation Mono, monospace" font-size="28.3" font-weight="bold" text-anchor="middle">haiwaiym.com</text></svg>
</body></html>
